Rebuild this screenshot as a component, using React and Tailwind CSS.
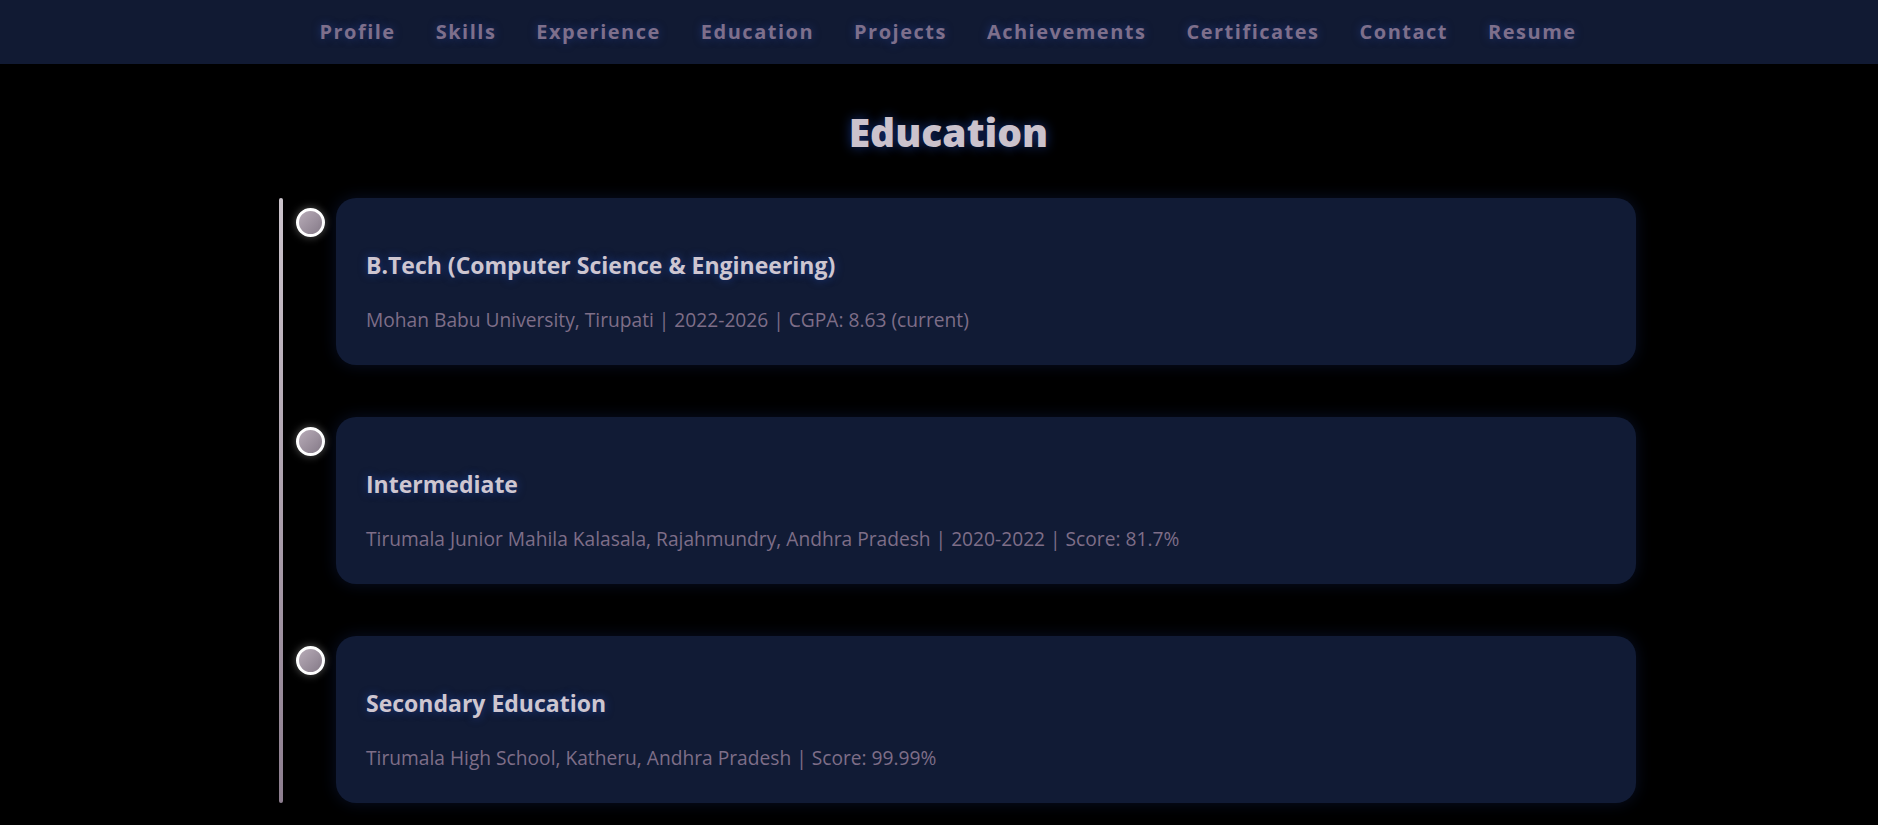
import React from "react";

const navItems = ["Profile","Skills","Experience","Education","Projects","Achievements","Certificates","Contact","Resume"];

const items = [
  { title: "B.Tech (Computer Science & Engineering)", sub: "Mohan Babu University, Tirupati | 2022-2026 | CGPA: 8.63 (current)" },
  { title: "Intermediate", sub: "Tirumala Junior Mahila Kalasala, Rajahmundry, Andhra Pradesh | 2020-2022 | Score: 81.7%" },
  { title: "Secondary Education", sub: "Tirumala High School, Katheru, Andhra Pradesh | Score: 99.99%" },
];

export default function App() {
  return (
    <div className="min-h-screen bg-black font-['Open_Sans',sans-serif]">
      <nav className="h-[64px] bg-[#111a33] flex items-center justify-center gap-[40px] pl-[18px]">
        {navItems.map((n) => (
          <a key={n} className="text-[20px] font-bold tracking-[1.5px] text-[#7e6f8b] [text-shadow:0_0_8px_rgba(40,70,160,0.6)]">{n}</a>
        ))}
      </nav>
      <section className="pt-[40px]">
        <h2 className="pl-[19px] text-center text-[39px] leading-[56px] font-extrabold text-[#cbc2cc] [text-shadow:0_0_12px_rgba(40,90,220,0.55)]">Education</h2>
        <div className="mt-[38px] pl-[279px] pr-[242px] flex">
          <div className="w-[4px] rounded-full bg-gradient-to-b from-[#cbc3cb] to-[#8d7e8f]" />
          <div className="flex-1 flex flex-col gap-[52px]">
            {items.map((it) => (
              <div key={it.title} className="flex items-start">
                <div className="mt-[10px] ml-[13px] w-[29px] h-[29px] rounded-full border-[3px] border-white bg-gradient-to-br from-[#b8acb8] to-[#857a88] shadow-[0_0_8px_rgba(255,255,255,0.35)] shrink-0" />
                <div className="ml-[11px] flex-1 h-[167px] rounded-[20px] bg-[#111b35] shadow-[0_0_16px_rgba(25,45,110,0.35)] pl-[30px] pt-[52px]">
                  <h3 className="text-[23px] leading-[30px] font-bold text-[#cec6d0] [text-shadow:0_0_8px_rgba(40,90,220,0.5)]">{it.title}</h3>
                  <p className="mt-[27px] text-[19.2px] leading-[26px] text-[#7e6e88]">{it.sub}</p>
                </div>
              </div>
            ))}
          </div>
        </div>
      </section>
    </div>
  );
}
